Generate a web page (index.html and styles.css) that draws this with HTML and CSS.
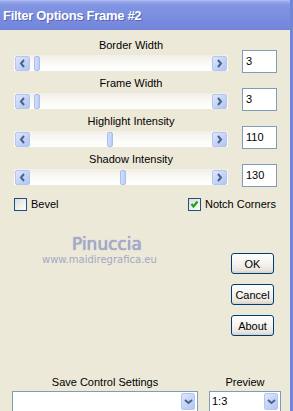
FILE: index.html
```html
<!DOCTYPE html>
<html>
<head>
<meta charset="utf-8">
<link rel="stylesheet" href="styles.css">
</head>
<body>
<div class="window">
  <div class="titlebar"><span class="title">Filter Options Frame #2</span></div>
  <div class="content">
    <div class="sliders">
      <div class="slider-row">
        <div class="label">Border Width</div>
        <div class="scrollbar">
          <span class="sb-btn"><svg width="7" height="9" viewBox="0 0 7 9"><polyline points="5,1 2,4.5 5,8" fill="none" stroke="#4d6185" stroke-width="2"/></svg></span>
          <span class="track"><span class="thumb" style="margin-left:4px"></span></span>
          <span class="sb-btn"><svg width="7" height="9" viewBox="0 0 7 9"><polyline points="2,1 5,4.5 2,8" fill="none" stroke="#4d6185" stroke-width="2"/></svg></span>
        </div>
        <div class="num">3</div>
      </div>
      <div class="slider-row">
        <div class="label">Frame Width</div>
        <div class="scrollbar">
          <span class="sb-btn"><svg width="7" height="9" viewBox="0 0 7 9"><polyline points="5,1 2,4.5 5,8" fill="none" stroke="#4d6185" stroke-width="2"/></svg></span>
          <span class="track"><span class="thumb" style="margin-left:4px"></span></span>
          <span class="sb-btn"><svg width="7" height="9" viewBox="0 0 7 9"><polyline points="2,1 5,4.5 2,8" fill="none" stroke="#4d6185" stroke-width="2"/></svg></span>
        </div>
        <div class="num">3</div>
      </div>
      <div class="slider-row">
        <div class="label">Highlight Intensity</div>
        <div class="scrollbar">
          <span class="sb-btn"><svg width="7" height="9" viewBox="0 0 7 9"><polyline points="5,1 2,4.5 5,8" fill="none" stroke="#4d6185" stroke-width="2"/></svg></span>
          <span class="track"><span class="thumb" style="margin-left:77px"></span></span>
          <span class="sb-btn"><svg width="7" height="9" viewBox="0 0 7 9"><polyline points="2,1 5,4.5 2,8" fill="none" stroke="#4d6185" stroke-width="2"/></svg></span>
        </div>
        <div class="num">110</div>
      </div>
      <div class="slider-row">
        <div class="label">Shadow Intensity</div>
        <div class="scrollbar">
          <span class="sb-btn"><svg width="7" height="9" viewBox="0 0 7 9"><polyline points="5,1 2,4.5 5,8" fill="none" stroke="#4d6185" stroke-width="2"/></svg></span>
          <span class="track"><span class="thumb" style="margin-left:90px"></span></span>
          <span class="sb-btn"><svg width="7" height="9" viewBox="0 0 7 9"><polyline points="2,1 5,4.5 2,8" fill="none" stroke="#4d6185" stroke-width="2"/></svg></span>
        </div>
        <div class="num">130</div>
      </div>
    </div>

    <div class="checks">
      <div class="check"><span class="box"></span><span>Bevel</span></div>
      <div class="check"><span class="box"><svg width="11" height="11" viewBox="0 0 11 11"><polyline points="2.5,5 4.5,7.5 8.5,2.5" fill="none" stroke="#21a121" stroke-width="2.2"/></svg></span><span>Notch Corners</span></div>
    </div>

    <div class="middle">
      <div class="logo">
        <div class="logo-name">Pinuccia</div>
        <div class="logo-url">www.maidiregrafica.eu</div>
      </div>
      <div class="buttons">
        <button class="btn">OK</button>
        <button class="btn">Cancel</button>
        <button class="btn">About</button>
      </div>
    </div>

    <div class="bottom">
      <div class="field field-save">
        <div class="flabel">Save Control Settings</div>
        <div class="select"><span class="sel-text"></span><span class="dd-btn"><svg width="9" height="7" viewBox="0 0 9 7"><polyline points="1,2 4.5,5 8,2" fill="none" stroke="#4d6185" stroke-width="2"/></svg></span></div>
      </div>
      <div class="field field-preview">
        <div class="flabel">Preview</div>
        <div class="select"><span class="sel-text">1:3</span><span class="dd-btn"><svg width="9" height="7" viewBox="0 0 9 7"><polyline points="1,2 4.5,5 8,2" fill="none" stroke="#4d6185" stroke-width="2"/></svg></span></div>
      </div>
    </div>
  </div>
</div>
</body>
</html>
```

FILE: styles.css
```css
html, body {
  margin: 0;
  padding: 0;
}
body {
  width: 293px;
  height: 411px;
  overflow: hidden;
  background: #ece9d8;
  font-family: "Liberation Sans", Arial, sans-serif;
  font-size: 11px;
  color: #000;
}
.window {
  width: 293px;
  height: 411px;
  box-sizing: border-box;
  border-right: 3px solid #6f86d9;
  display: flex;
  flex-direction: column;
  overflow: hidden;
}
.titlebar {
  height: 30px;
  flex: none;
  box-sizing: border-box;
  padding: 8px 0 0 3px;
  background: linear-gradient(#b4c1f2 0, #95a6ea 2px, #8295e4 5px, #7b8ee0 50%, #7285db 100%);
}
.title {
  color: #fff;
  font-weight: bold;
  font-size: 13px;
  letter-spacing: -0.3px;
  line-height: 16px;
  text-shadow: 1px 1px 0 #5665b0;
}
.content {
  flex: 1;
  display: flex;
  flex-direction: column;
}
.sliders {
  display: flex;
  flex-direction: column;
  gap: 5px;
  padding: 8px 0 0 14px;
}
.slider-row {
  display: grid;
  grid-template-columns: 214px 35px;
  grid-template-rows: 14px 16px;
  column-gap: 14px;
  row-gap: 3px;
}
.label {
  grid-column: 1 / -1;
  grid-row: 1;
  margin-right: 29px;
  text-align: center;
  line-height: 14px;
}
.scrollbar {
  grid-column: 1;
  grid-row: 2;
  height: 16px;
  box-sizing: border-box;
  padding: 0 1px;
  display: flex;
  align-items: center;
  background: linear-gradient(#f1efe7, #fbfbf8 60%, #ffffff);
}
.sb-btn {
  width: 15px;
  height: 15px;
  flex: none;
  box-sizing: border-box;
  border: 1px solid #b4c5ef;
  border-radius: 2px;
  background: linear-gradient(135deg, #dde6fd, #c1d2f8 60%, #b2c6f3);
  display: flex;
  align-items: center;
  justify-content: center;
}
.track {
  flex: 1;
  height: 15px;
  display: flex;
  align-items: center;
}
.thumb {
  width: 6px;
  height: 15px;
  box-sizing: border-box;
  border: 1px solid #a9bdee;
  border-radius: 2px;
  background: linear-gradient(90deg, #d3defc, #bccdf7);
}
.num {
  grid-column: 2;
  grid-row: 1 / 3;
  align-self: end;
  height: 23px;
  margin-bottom: -2px;
  box-sizing: border-box;
  border: 1px solid #7f9db9;
  background: #fff;
  padding-left: 3px;
  line-height: 21px;
}
.checks {
  display: grid;
  grid-template-columns: 174px auto;
  padding-left: 14px;
  margin-top: 13px;
}
.check {
  display: flex;
  align-items: center;
  gap: 4px;
  line-height: 13px;
}
.box {
  width: 13px;
  height: 13px;
  box-sizing: border-box;
  border: 1px solid #1c5180;
  background: linear-gradient(135deg, #dcdcd7, #ffffff);
  display: flex;
  align-items: center;
  justify-content: center;
}
.middle {
  display: flex;
  align-items: flex-start;
  margin-top: 23px;
}
.logo {
  width: 130px;
  flex: none;
  margin-left: 42px;
  color: #a7aacd;
}
.logo-name {
  padding-left: 30px;
  font-family: "DejaVu Sans", sans-serif;
  font-size: 17px;
  line-height: 20px;
  text-shadow: 0 0 1px #7c80ae;
}
.logo-url {
  padding-left: 0;
  font-family: "DejaVu Sans", sans-serif;
  font-size: 10px;
  line-height: 12px;
  color: #a4a7c6;
}
.buttons {
  margin-left: auto;
  margin-right: 16px;
  padding-top: 19px;
  display: flex;
  flex-direction: column;
  gap: 10px;
}
.btn {
  width: 43px;
  height: 21px;
  margin: 0;
  padding: 0;
  box-sizing: border-box;
  border: 1px solid #003c74;
  border-radius: 3px;
  background: linear-gradient(#ffffff, #f4f3ee 50%, #e8e6dd 85%, #d6d0c5);
  font-family: "Liberation Sans", Arial, sans-serif;
  font-size: 11px;
  color: #000;
}
.bottom {
  display: flex;
  gap: 11px;
  padding-left: 12px;
  margin-top: 39px;
}
.field-save {
  width: 186px;
}
.field-preview {
  width: 72px;
}
.flabel {
  text-align: center;
  line-height: 14px;
  margin-bottom: 2px;
}
.select {
  height: 21px;
  box-sizing: border-box;
  border: 1px solid #7f9db9;
  background: #fff;
  display: flex;
  justify-content: space-between;
  padding: 1px 2px 1px 2px;
}
.sel-text {
  line-height: 17px;
}
.dd-btn {
  width: 14px;
  height: 17px;
  box-sizing: border-box;
  border: 1px solid #b4c5ef;
  border-radius: 2px;
  background: linear-gradient(135deg, #dde6fd, #c1d2f8 60%, #b2c6f3);
  display: flex;
  align-items: center;
  justify-content: center;
}
```
